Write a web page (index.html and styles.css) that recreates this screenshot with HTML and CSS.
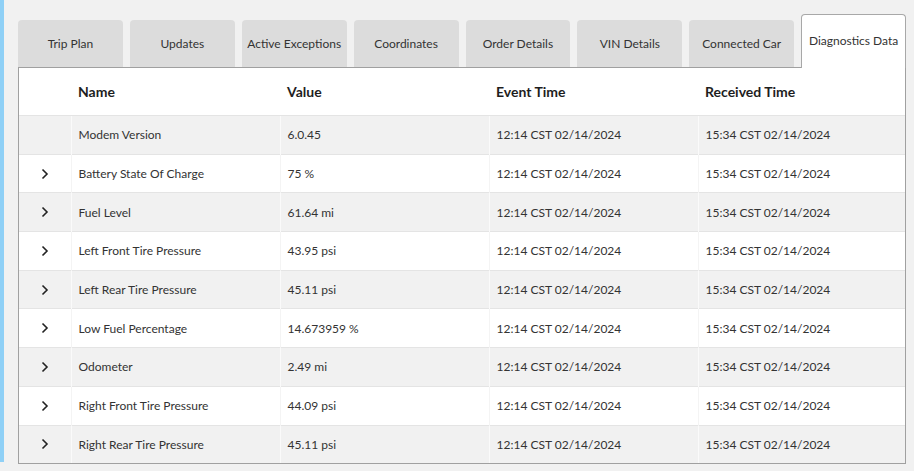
FILE: index.html
```html
<!DOCTYPE html>
<html lang="en">
<head>
    <meta charset="UTF-8">
    <meta name="viewport" content="width=device-width, initial-scale=1.0">
    <title>Diagnostics Data</title>
    <link rel="stylesheet" href="styles.css">
</head>
<body>

    <!-- Left accent strip -->
    <div class="side-strip"></div>

    <main class="content">
        <!-- Tabs -->
        <ul class="tabs">
            <li class="tab">Trip Plan</li>
            <li class="tab">Updates</li>
            <li class="tab">Active Exceptions</li>
            <li class="tab">Coordinates</li>
            <li class="tab">Order Details</li>
            <li class="tab">VIN Details</li>
            <li class="tab">Connected Car</li>
            <li class="tab active">Diagnostics Data</li>
        </ul>

        <!-- Diagnostics table -->
        <section class="panel">
            <table class="diag-table">
                <colgroup>
                    <col class="col-toggle">
                    <col class="col-data">
                    <col class="col-data">
                    <col class="col-data">
                    <col class="col-last">
                </colgroup>
                <thead>
                    <tr>
                        <th></th>
                        <th>Name</th>
                        <th>Value</th>
                        <th>Event Time</th>
                        <th>Received Time</th>
                    </tr>
                </thead>
                <tbody id="diag-rows"></tbody>
            </table>
        </section>
    </main>

    <script>
        const rows = [
            { name: "Modem Version", value: "6.0.45", expandable: false },
            { name: "Battery State Of Charge", value: "75 %", expandable: true },
            { name: "Fuel Level", value: "61.64 mi", expandable: true },
            { name: "Left Front Tire Pressure", value: "43.95 psi", expandable: true },
            { name: "Left Rear Tire Pressure", value: "45.11 psi", expandable: true },
            { name: "Low Fuel Percentage", value: "14.673959 %", expandable: true },
            { name: "Odometer", value: "2.49 mi", expandable: true },
            { name: "Right Front Tire Pressure", value: "44.09 psi", expandable: true },
            { name: "Right Rear Tire Pressure", value: "45.11 psi", expandable: true }
        ];

        const chevron = `<svg class="chevron" width="8" height="12" viewBox="0 0 8 12">
            <path d="M1.5 1.5 L6 6 L1.5 10.5" fill="none" stroke="#222" stroke-width="1.6"/>
        </svg>`;

        const tbody = document.getElementById("diag-rows");
        rows.forEach(row => {
            const tr = document.createElement("tr");
            tr.innerHTML = `
                <td class="toggle">${row.expandable ? chevron : ""}</td>
                <td>${row.name}</td>
                <td>${row.value}</td>
                <td>12:14 CST 02/14/2024</td>
                <td>15:34 CST 02/14/2024</td>
            `;
            tbody.appendChild(tr);
        });
    </script>

</body>
</html>
```

FILE: styles.css
```css
body {
    font-family: Lato, "Open Sans", Arial, sans-serif;
    margin: 0;
    padding: 0;
    background: #f1f1f1;
    color: #333;
    display: flex;
    align-items: flex-start;
}

/* Left accent strip */
.side-strip {
    width: 4px;
    height: 462px;
    background: #8fd0f6;
    flex-shrink: 0;
}

.content {
    padding: 14px 0 0 14px;
    width: 888px;
    flex-shrink: 0;
}

/* Tabs */
.tabs {
    list-style: none;
    margin: 0;
    padding: 0;
    display: flex;
    align-items: flex-end;
    gap: 7px;
}

.tab {
    width: 105px;
    height: 47px;
    display: flex;
    align-items: center;
    justify-content: center;
    background: #dcdcdc;
    border-radius: 4px 4px 0 0;
    font-size: 12px;
    color: #333;
    white-space: nowrap;
    box-sizing: border-box;
}

.tab.active {
    height: 54px;
    background: #fff;
    border: 1px solid #a8a8a8;
    border-bottom: none;
    margin-bottom: -1px;
    padding-bottom: 3px;
    position: relative;
    z-index: 1;
}

/* Panel */
.panel {
    background: #fff;
    border: 1px solid #a0a0a0;
    box-sizing: border-box;
    width: 888px;
    overflow: hidden;
}

.diag-table {
    width: 886px;
    border-collapse: collapse;
    table-layout: fixed;
    font-size: 12px;
}

.col-toggle {
    width: 52px;
}

.col-data {
    width: 209px;
}

.col-last {
    width: 207px;
}

.diag-table th {
    height: 47px;
    text-align: left;
    font-size: 14px;
    font-weight: bold;
    color: #1e1e1e;
    padding: 0 0 0 7px;
}

.diag-table td {
    height: 37.7px;
    padding: 0 0 0 7px;
    border-top: 1px solid #e4e4e4;
    border-left: 1px solid #f4f4f4;
    color: #333;
    white-space: nowrap;
}

.diag-table td:first-child {
    border-left: none;
}

.diag-table tbody tr:nth-child(odd) td {
    background: #f1f1f1;
    border-left-color: #fafafa;
}

.diag-table td.toggle {
    padding: 0;
    text-align: center;
}

.chevron {
    display: block;
    margin: 0 auto;
}
```
